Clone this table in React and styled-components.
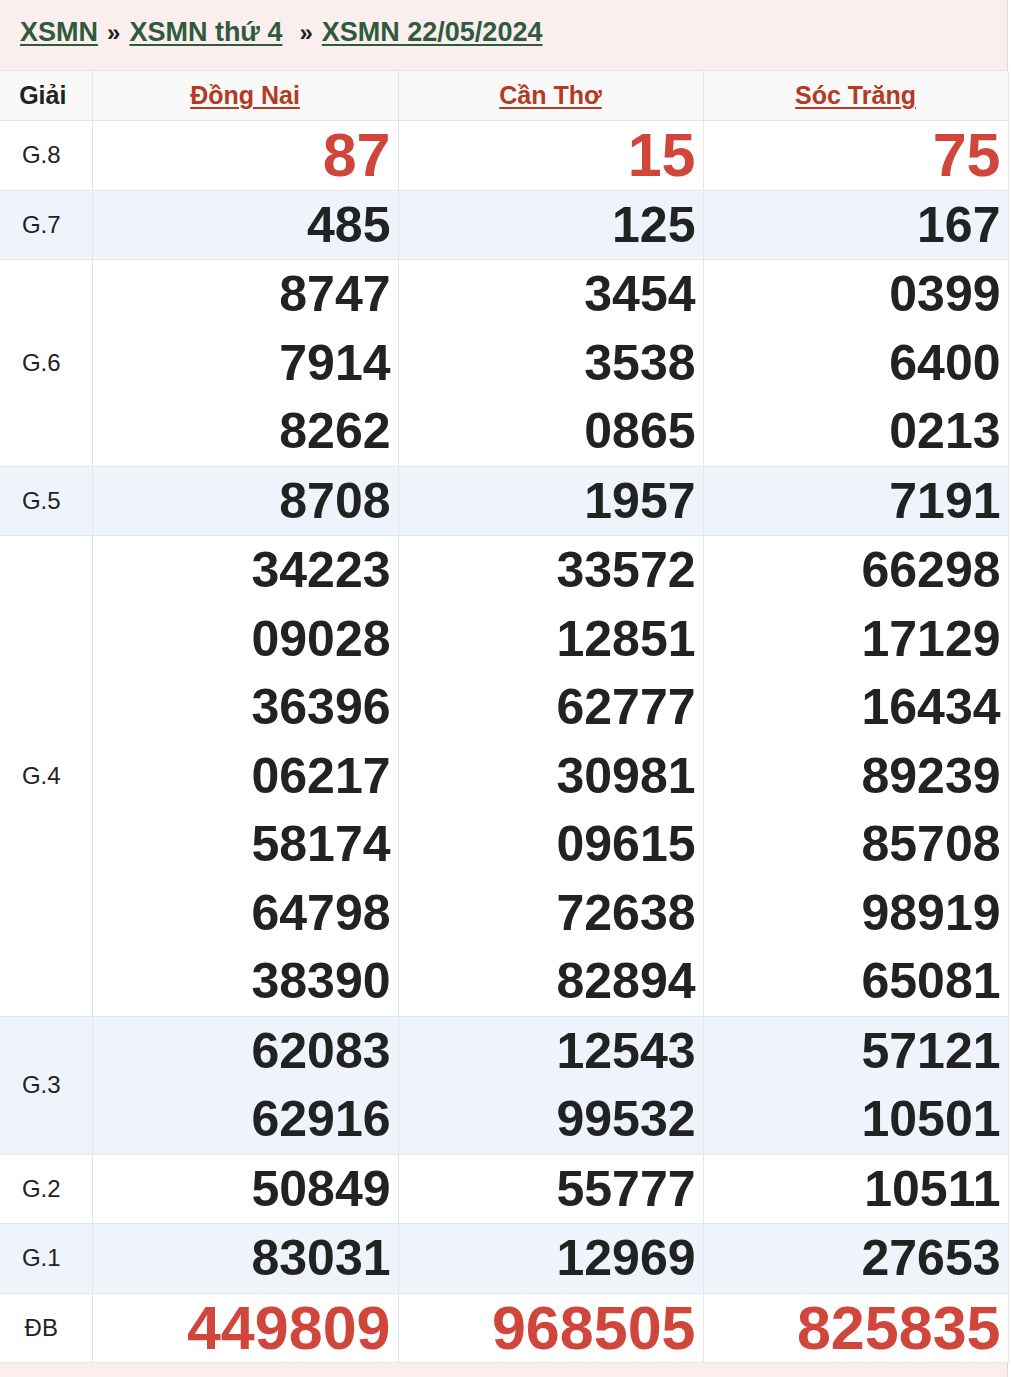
import React from "react";
import styled, { createGlobalStyle } from "styled-components";

const GlobalStyle = createGlobalStyle`
  body {
    margin: 0;
    background: #ffffff;
    font-family: "Liberation Sans", Arial, sans-serif;
  }
`;

const provinces = ["Đồng Nai", "Cần Thơ", "Sóc Trăng"];

const results = [
  { name: "G.8", big: true, shaded: false, nums: [["87"], ["15"], ["75"]] },
  { name: "G.7", shaded: true, nums: [["485"], ["125"], ["167"]] },
  {
    name: "G.6",
    shaded: false,
    nums: [
      ["8747", "7914", "8262"],
      ["3454", "3538", "0865"],
      ["0399", "6400", "0213"],
    ],
  },
  { name: "G.5", shaded: true, nums: [["8708"], ["1957"], ["7191"]] },
  {
    name: "G.4",
    shaded: false,
    nums: [
      ["34223", "09028", "36396", "06217", "58174", "64798", "38390"],
      ["33572", "12851", "62777", "30981", "09615", "72638", "82894"],
      ["66298", "17129", "16434", "89239", "85708", "98919", "65081"],
    ],
  },
  {
    name: "G.3",
    shaded: true,
    nums: [
      ["62083", "62916"],
      ["12543", "99532"],
      ["57121", "10501"],
    ],
  },
  { name: "G.2", shaded: false, nums: [["50849"], ["55777"], ["10511"]] },
  { name: "G.1", shaded: true, nums: [["83031"], ["12969"], ["27653"]] },
  { name: "ĐB", big: true, shaded: false, nums: [["449809"], ["968505"], ["825835"]] },
];

export default function App() {
  return (
    <>
      <GlobalStyle />
      <Page>
        <Breadcrumb>
          <CrumbLink href="#">XSMN</CrumbLink>
          <Sep>»</Sep>
          <CrumbLink href="#">XSMN thứ 4</CrumbLink>
          <Sep $wide>»</Sep>
          <CrumbLink href="#">XSMN 22/05/2024</CrumbLink>
        </Breadcrumb>
        <Table>
          <colgroup>
            <col style={{ width: "92px" }} />
            <col style={{ width: "306px" }} />
            <col style={{ width: "305px" }} />
            <col style={{ width: "305px" }} />
          </colgroup>
          <thead>
            <tr>
              <HeadCell>Giải</HeadCell>
              {provinces.map((p) => (
                <HeadCell key={p}>
                  <ProvinceLink href="#">{p}</ProvinceLink>
                </HeadCell>
              ))}
            </tr>
          </thead>
          <tbody>
            {results.map((row) => (
              <Row key={row.name} $shaded={row.shaded}>
                <PrizeCell>{row.name}</PrizeCell>
                {row.nums.map((list, i) => (
                  <NumCell key={i}>
                    {list.map((n) => (
                      <Number key={n} $big={row.big}>
                        {n}
                      </Number>
                    ))}
                  </NumCell>
                ))}
              </Row>
            ))}
          </tbody>
        </Table>
        <Footer />
      </Page>
    </>
  );
}

const Page = styled.div`
  width: 1008px;
  border-right: 1px solid #dcdcdc;
  box-sizing: border-box;
`;

const Breadcrumb = styled.div`
  height: 71px;
  box-sizing: border-box;
  background: #faefee;
  border-bottom: 1px solid #f1e2e2;
  display: flex;
  align-items: center;
  padding: 0 0 5px 20px;
  font-size: 27px;
  font-weight: 700;
`;

const CrumbLink = styled.a`
  color: #2f5a3c;
  text-decoration: underline;
  text-underline-offset: 3px;
  text-decoration-thickness: 2px;
`;

const Sep = styled.span`
  color: #222;
  font-size: 24px;
  margin: ${(p) => (p.$wide ? "0 9px 0 17px" : "0 9px")};
`;

const Table = styled.table`
  width: 1007px;
  table-layout: fixed;
  border-collapse: collapse;
`;

const HeadCell = styled.th`
  height: 49px;
  padding: 0;
  background: #f9f9f9;
  border: 1px solid #e6e6e6;
  border-top: none;
  font-size: 25px;
  font-weight: 700;
  color: #222;
  text-align: center;
  &:first-child {
    border-left: none;
    padding-right: 6px;
  }
`;

const ProvinceLink = styled.a`
  color: #b53a22;
  text-decoration: underline;
  text-underline-offset: 3px;
  text-decoration-thickness: 2px;
`;

const Row = styled.tr`
  background: ${(p) => (p.$shaded ? "#eff4fc" : "#ffffff")};
`;

const PrizeCell = styled.td`
  border: 1px solid #e6e6e6;
  border-left: none;
  padding: 0 9px 0 0;
  text-align: center;
  font-size: 24px;
  color: #222;
`;

const NumCell = styled.td`
  border: 1px solid #e6e6e6;
  padding: 0 7px 0 0;
  text-align: right;
  vertical-align: top;
`;

const Number = styled.div`
  font-size: ${(p) => (p.$big ? "61px" : "50px")};
  line-height: 68.5px;
  font-weight: 700;
  color: ${(p) => (p.$big ? "#d0463b" : "#222")};
`;

const Footer = styled.div`
  height: 16px;
  background: #faefee;
`;
